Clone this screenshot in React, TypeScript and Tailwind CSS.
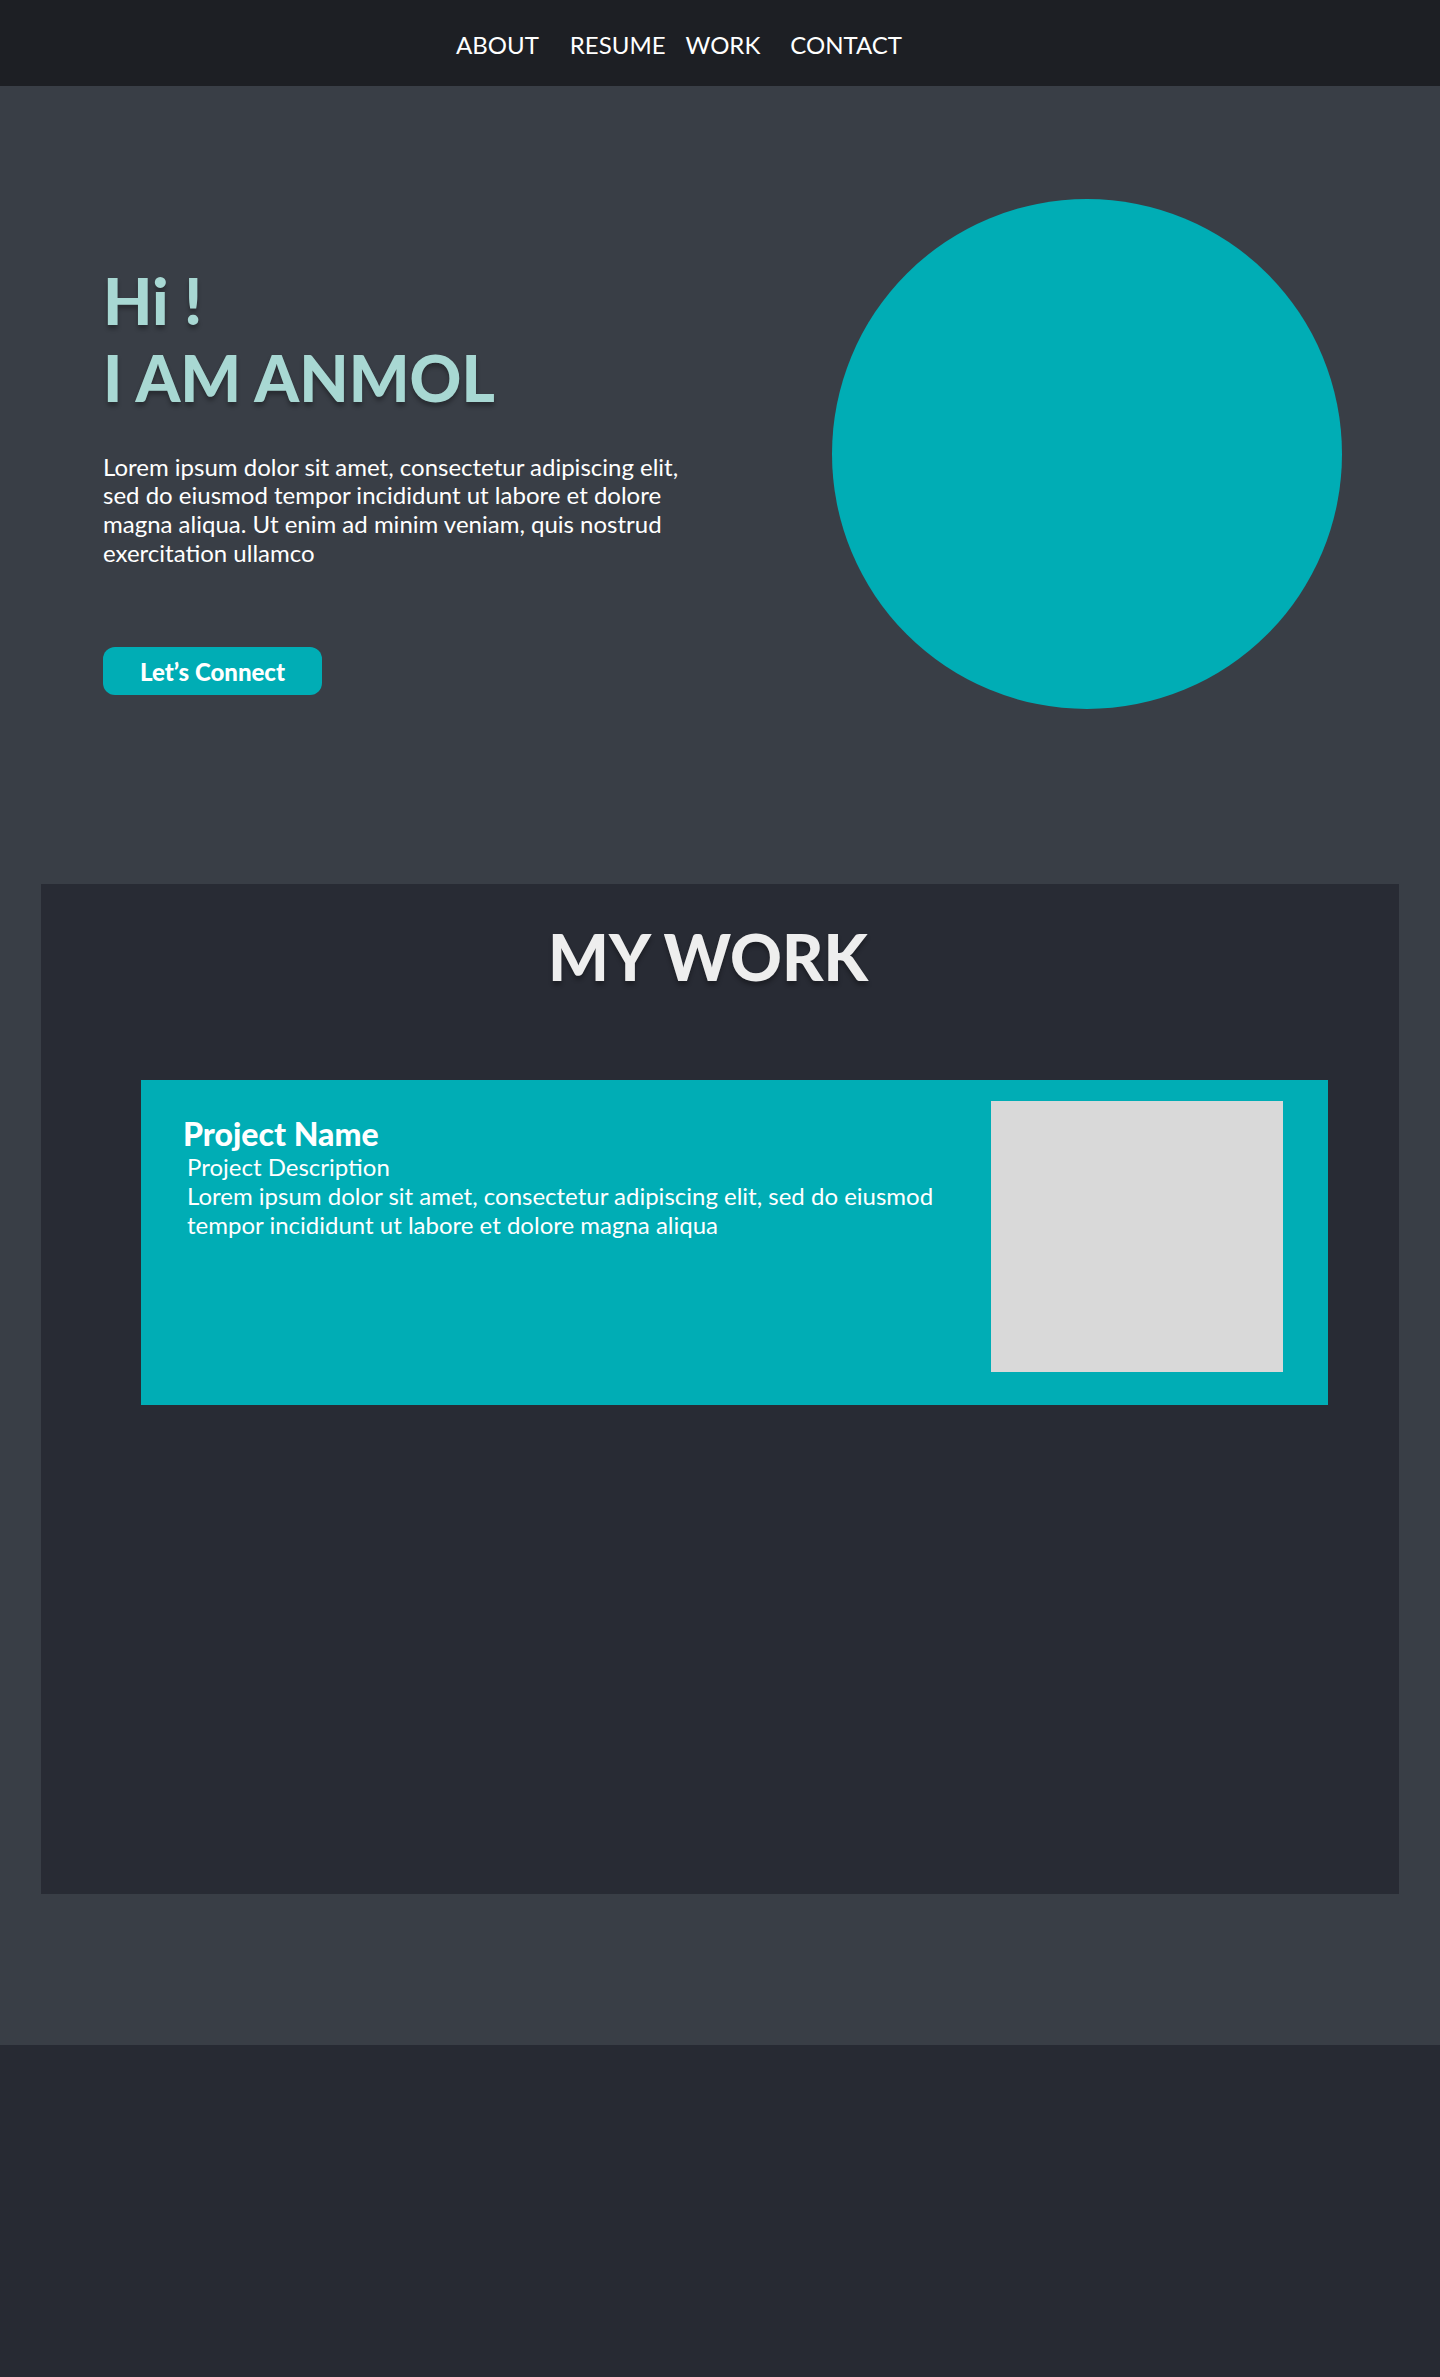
const navItems = [
  { label: "ABOUT", gap: "mr-[31px]" },
  { label: "RESUME", gap: "mr-[20px]" },
  { label: "WORK", gap: "mr-[30px]" },
  { label: "CONTACT", gap: "" },
];

const Header: React.FC = () => {
  return (
    <header className="h-[86px] bg-[#1d1f24] flex items-center pl-[456px] pt-[4px]">
      <nav className="flex items-center text-[24px] leading-[1.2] text-white">
        {navItems.map((item) => (
          <a key={item.label} href="#" className={item.gap}>
            {item.label}
          </a>
        ))}
      </nav>
    </header>
  );
};

const Hero: React.FC = () => {
  return (
    <div className="flex items-start justify-between pl-[103px] pr-[98px] pt-[113px]">
      <div className="pt-[64px] w-[600px]">
        <h1 className="text-[64px] leading-[1.2] font-black text-[#a8d8d3] [text-shadow:0px_4px_4px_rgba(0,0,0,0.3)]">
          Hi !
          <br />I AM ANMOL
        </h1>
        <p className="mt-[36px] text-[24px] leading-[1.2] text-white w-[590px]">
          Lorem ipsum dolor sit amet, consectetur adipiscing elit, sed do
          eiusmod tempor incididunt ut labore et dolore magna aliqua. Ut enim
          ad minim veniam, quis nostrud exercitation ullamco
        </p>
        <button className="mt-[79px] h-[48px] w-[219px] rounded-[12px] bg-[#00adb5] text-white text-[24px] font-black leading-none pt-[2px]">
          Let’s Connect
        </button>
      </div>
      <div className="w-[510px] h-[510px] rounded-full bg-[#00adb5] shrink-0" />
    </div>
  );
};

const ProjectCard: React.FC = () => {
  return (
    <div className="ml-[100px] mr-[71px] h-[325px] bg-[#00adb5] flex justify-between pl-[42px] pt-[35px] pr-[45px]">
      <div className="text-white">
        <h3 className="text-[32px] leading-[1.2] font-black">Project Name</h3>
        <p className="ml-[4px] text-[24px] leading-[1.2] w-[760px]">
          Project Description
          <br />
          Lorem ipsum dolor sit amet, consectetur adipiscing elit, sed do
          eiusmod tempor incididunt ut labore et dolore magna aliqua
        </p>
      </div>
      <div className="-mt-[14px] w-[292px] h-[271px] bg-[#d9d9d9] shrink-0" />
    </div>
  );
};

const Work: React.FC = () => {
  return (
    <section className="mx-[41px] mt-[175px] h-[1010px] bg-[#282b34] pt-[35px]">
      <h2 className="pr-[24px] text-center text-[64px] leading-[1.2] font-black text-[#eeeeee] [text-shadow:0px_4px_4px_rgba(0,0,0,0.3)]">
        MY WORK
      </h2>
      <div className="mt-[84px]">
        <ProjectCard />
      </div>
    </section>
  );
};

export default function App() {
  return (
    <div className="min-h-screen font-['Lato','Liberation_Sans',sans-serif]">
      <Header />
      <main className="bg-[#393e46] pb-[151px]">
        <Hero />
        <Work />
      </main>
      <footer className="h-[333px] bg-[#272a33]" />
    </div>
  );
}
